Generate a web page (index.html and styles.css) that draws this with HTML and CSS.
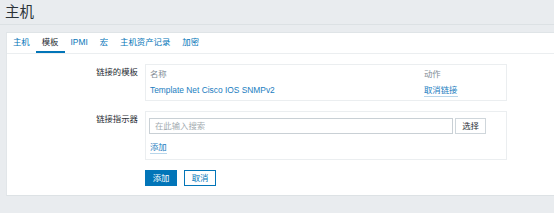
FILE: index.html
```html
<!DOCTYPE html>
<html lang="zh">
<head>
<meta charset="utf-8">
<title>主机</title>
<link rel="stylesheet" href="styles.css">
</head>
<body>
<header class="page-header"><h1 class="page-title">主机</h1></header>
<main class="card">
  <nav class="tabs">
    <a class="tab">主机</a>
    <a class="tab tab-active">模板</a>
    <a class="tab">IPMI</a>
    <a class="tab">宏</a>
    <a class="tab">主机资产记录</a>
    <a class="tab">加密</a>
  </nav>
  <form class="form">
    <div class="row">
      <div class="label">链接的模板</div>
      <div class="box box-table">
        <div class="trow thead"><span class="c-name">名称</span><span class="c-act">动作</span></div>
        <div class="trow"><span class="c-name link">Template Net Cisco IOS SNMPv2</span><span class="c-act link dotted">取消链接</span></div>
      </div>
    </div>
    <div class="row">
      <div class="label">链接指示器</div>
      <div class="box box-link">
        <div class="search-line">
          <div class="input">在此输入搜索</div>
          <div class="btn-select">选择</div>
        </div>
        <div class="add-line"><span class="link dotted">添加</span></div>
      </div>
    </div>
    <div class="actions">
      <div class="btn btn-primary">添加</div>
      <div class="btn btn-secondary">取消</div>
    </div>
  </form>
</main>
</body>
</html>
```

FILE: styles.css
```css
* { box-sizing: border-box; }
html, body { margin: 0; padding: 0; }
body {
  width: 554px;
  height: 213px;
  overflow: hidden;
  background: #e9ecef;
  font-family: "Liberation Sans", "Noto Sans CJK SC", sans-serif;
  font-size: 8.4px;
  color: #1f2c33;
}
.page-header {
  height: 25px;
  border-bottom: 1px solid #dce1e4;
  padding-left: 5px;
  margin-bottom: 7px;
}
.page-title {
  margin: 0;
  font-weight: normal;
  font-size: 14.5px;
  line-height: 25px;
  color: #2a3338;
}
.card {
  margin-left: 6px;
  background: #fff;
  border-top: 1px solid #dfe4e7;
  border-left: 1px solid #e2e6e9;
  border-bottom: 1px solid #dde2e5;
  height: 164px;
}
.tabs {
  display: flex;
  padding-left: 0;
  border-bottom: 1px solid #ebeef0;
  height: 21px;
}
.tab {
  padding: 0 6px;
  line-height: 19px;
  color: #0275b8;
  border-bottom: 2px solid transparent;
}
.tab-active {
  color: #1f2c33;
  border-bottom-color: #0275b8;
}
.form {
  padding-top: 10px;
}
.row {
  display: flex;
  gap: 7px;
  margin-bottom: 10px;
}
.label {
  width: 131px;
  text-align: right;
  line-height: 16px;
}
.box {
  width: 362px;
  border: 1px solid #ebeef0;
}
.box-table {
  padding: 2px 4px 4px;
  height: 37px;
}
.trow {
  display: flex;
  line-height: 15px;
}
.thead { color: #7f8d96; }
.c-name { width: 274px; }
.link { color: #1a7dc0; }
.dotted { border-bottom: 1px solid #b9d6ea; line-height: 12px; align-self: center; }
.thead + .trow { margin-top: 1px; }
.box-link {
  padding: 6px 3px 5px;
  height: 49px;
}
.search-line {
  display: flex;
  gap: 2px;
}
.input {
  width: 304px;
  height: 16px;
  border: 1px solid #c9d0d5;
  padding-left: 5px;
  line-height: 14px;
  color: #a3abb0;
}
.btn-select {
  width: 31px;
  height: 16px;
  border: 1px solid #cfd6db;
  text-align: center;
  line-height: 14px;
  color: #1f2c33;
}
.add-line {
  margin-top: 7px;
  padding-left: 1px;
  display: flex;
}
.actions {
  display: flex;
  gap: 7px;
  padding-left: 138px;
}
.btn {
  width: 32px;
  height: 16px;
  text-align: center;
  line-height: 14px;
}
.btn-primary {
  background: #0275b8;
  border: 1px solid #0275b8;
  color: #fff;
}
.btn-secondary {
  background: #fff;
  border: 1px solid #0275b8;
  color: #0275b8;
}
```
